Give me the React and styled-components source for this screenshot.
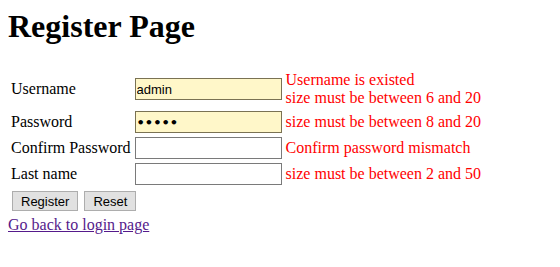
import React from 'react'
import styled, { createGlobalStyle } from 'styled-components'

const GlobalStyle = createGlobalStyle`
    body{
        margin:8px;
        font-family:"Liberation Serif", "Times New Roman", serif;
        font-size:16px;
        background:#fff;
        color:#000;
    }
`;

const Title = styled.h1`
    font-size:32px;
    font-weight:bold;
    margin:0 0 23px;
    line-height:37px;
`;

const Form = styled.form`
    margin:0;
`;

const Table = styled.table`
    border-spacing:2px;
    line-height:18px;
    td{
        padding:1px;
        white-space:nowrap;
    }
`;

const Field = styled.input`
    box-sizing:border-box;
    width:147px;
    height:22px;
    margin:0;
    padding:1px 1px;
    font-family:${(props) => (props.type === "password" ? '"DejaVu Sans", Verdana, sans-serif' : '"Liberation Sans", Arial, sans-serif')};
    font-size:13px;
    font-weight:${(props) => (props.type === "password" ? "bold" : "normal")};
    color:#000;
    border:1px solid ${(props) => (props.$filled ? "#7a7253" : "#7a7a7a")};
    background:${(props) => (props.$filled ? "#fff7c9" : "#fff")};
    outline:none;
`;

const Error = styled.td`
    color:#ff0000;
`;

const Buttons = styled.div`
    display:flex;
    gap:6px;
    padding:3px 0 0 4px;
`;

const Button = styled.button`
    height:20px;
    padding:0 8px;
    font-family:"Liberation Sans", Arial, sans-serif;
    font-size:13px;
    color:#000;
    background:#e1e1e1;
    border:1px solid #adadad;
    border-radius:0;
`;

const BackLink = styled.a`
    display:inline-block;
    margin-top:5px;
    color:#551a8b;
    text-decoration:underline;
`;

export default function App() {
    return (
        <>
            <GlobalStyle />
            <Title>Register Page</Title>
            <Form onSubmit={(e) => e.preventDefault()}>
                <Table>
                    <tbody>
                        <tr>
                            <td>Username</td>
                            <td><Field $filled type="text" defaultValue="admin" /></td>
                            <Error>Username is existed<br />size must be between 6 and 20</Error>
                        </tr>
                        <tr>
                            <td>Password</td>
                            <td><Field $filled type="password" defaultValue="admin" /></td>
                            <Error>size must be between 8 and 20</Error>
                        </tr>
                        <tr>
                            <td>Confirm Password</td>
                            <td><Field type="password" /></td>
                            <Error>Confirm password mismatch</Error>
                        </tr>
                        <tr>
                            <td>Last name</td>
                            <td><Field type="text" /></td>
                            <Error>size must be between 2 and 50</Error>
                        </tr>
                    </tbody>
                </Table>
                <Buttons>
                    <Button type="submit">Register</Button>
                    <Button type="reset">Reset</Button>
                </Buttons>
            </Form>
            <BackLink href="#login">Go back to login page</BackLink>
        </>
    )
}
